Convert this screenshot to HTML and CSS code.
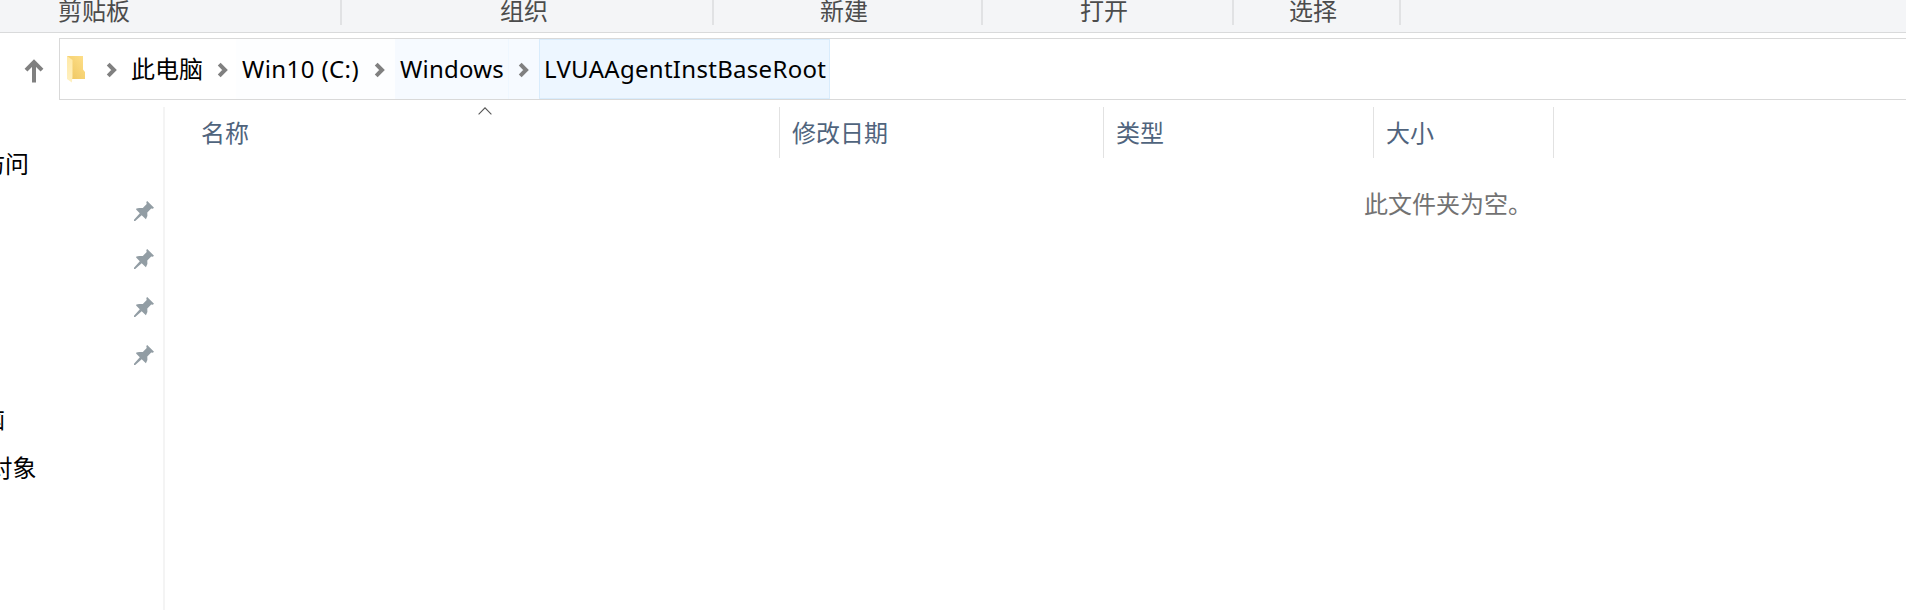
FILE: index.html
```html
<!DOCTYPE html>
<html lang="zh-CN">
<head>
<meta charset="utf-8">
<title>LVUAAgentInstBaseRoot</title>
<link rel="stylesheet" href="styles.css">
</head>
<body>
<svg class="defs" width="0" height="0">
  <symbol id="chevron" viewBox="0 0 12 16"><path d="M2.2 2.2 8 8 2.2 13.8" fill="none" stroke="#808080" stroke-width="4"/></symbol>
  <symbol id="pin" viewBox="0 0 20 20"><path d="M13.2 0 20 6.8 18.8 7.7 17.2 7.4 13.3 11.6 13.4 15 11.9 18.3 7.7 14.2 1.2 20 0 20 0 18.8 5.8 12.3 2.1 8.5 2.4 7.6 5.2 6.9 8.8 6.9 12.7 3 12.3 1Z" fill="#929da4"/></symbol>
</svg>
<header class="ribbon">
  <div class="group clipboard"><span>剪贴板</span></div>
  <div class="group organize"><span>组织</span></div>
  <div class="group new"><span>新建</span></div>
  <div class="group open"><span>打开</span></div>
  <div class="group select"><span>选择</span></div>
</header>
<nav class="toolbar">
  <svg class="up" width="20" height="24" viewBox="0 0 20 24"><path d="M10 23.500V4M2 11.200 10 3.200 18 11.200" fill="none" stroke="#808080" stroke-width="4"/></svg>
  <div class="address">
    <svg class="folder" width="20" height="28" viewBox="0 0 20 28">
      <defs>
        <linearGradient id="back" x1="0" y1="1" x2="1" y2="0"><stop offset="0" stop-color="#edc55f"/><stop offset="1" stop-color="#ffe08a"/></linearGradient>
        <linearGradient id="flap" x1="0" y1="0" x2="0" y2="1"><stop offset="0" stop-color="#ffe9a6"/><stop offset="1" stop-color="#fff0c0"/></linearGradient>
      </defs>
      <path d="M1 1H17V14.500L19 17V24H6L1 20Z" fill="url(#back)"/>
      <path d="M1 1 6.500 5V22L5.800 27.500 1 24Z" fill="url(#flap)"/>
    </svg>
    <svg class="chev first"><use href="#chevron"/></svg>
    <span class="crumb pc">此电脑</span>
    <svg class="chev second"><use href="#chevron"/></svg>
    <span class="crumb drive">Win10 (C:)</span>
    <span class="drop faint"><svg class="chev"><use href="#chevron"/></svg></span>
    <span class="crumb windows">Windows</span>
    <span class="drop"><svg class="chev"><use href="#chevron"/></svg></span>
    <span class="crumb current">LVUAAgentInstBaseRoot</span>
  </div>
</nav>
<main class="body">
  <aside class="tree">
    <div class="row">快速访问</div>
    <div class="row pinned"><svg><use href="#pin"/></svg></div>
    <div class="row pinned"><svg><use href="#pin"/></svg></div>
    <div class="row pinned"><svg><use href="#pin"/></svg></div>
    <div class="row pinned"><svg><use href="#pin"/></svg></div>
    <div class="row computer">此电脑</div>
    <div class="row objects">3D 对象</div>
  </aside>
  <section class="files">
    <div class="columns">
      <div class="column name">名称<svg class="sort" width="14" height="8" viewBox="0 0 14 8"><path d="M.6 7.300 7 .9 13.400 7.300" fill="none" stroke="#555" stroke-width="1.100"/></svg></div>
      <div class="column date">修改日期</div>
      <div class="column type">类型</div>
      <div class="column size">大小</div>
    </div>
    <p class="empty">此文件夹为空。</p>
  </section>
</main>
</body>
</html>
```
FILE: styles.css
```css
* { box-sizing: border-box; }
body {
  margin: 0;
  height: 610px;
  display: flex;
  flex-direction: column;
  overflow: hidden;
  background: #fff;
  color: #000;
  font: 24px/32px "Noto Sans", "Noto Sans CJK SC", sans-serif;
}
.defs { position: absolute; }
svg { flex: none; display: block; }

.ribbon {
  flex: none;
  display: flex;
  height: 33px;
  background: #f4f5f7;
  border-bottom: 1px solid #d9dadb;
  color: #4c4c4c;
}
.group {
  display: flex;
  justify-content: center;
  height: 25px;
  border-right: 2px solid #e1e2e4;
  white-space: nowrap;
}
.group span { margin-top: -5px; }
.clipboard { width: 342px; justify-content: flex-start; padding-left: 58px; }
.organize { width: 372px; padding-right: 6px; }
.new { width: 269px; padding-right: 7px; }
.open { width: 251px; padding-right: 7px; }
.select { width: 167px; padding-right: 7px; }

.toolbar {
  flex: none;
  display: flex;
  height: 74px;
  padding-top: 5px;
}
.up { margin: 21px 15px 0 24px; width: 20px; }
.address {
  flex: 1;
  display: flex;
  align-items: center;
  height: 62px;
  border: 1px solid #d9d9d9;
  border-right: 0;
  white-space: nowrap;
}
.folder { margin: 0 0 0 6px; }
.chev { width: 12px; height: 16px; margin-top: 2px; }
.first { margin-left: 20px; }
.second { margin-left: 14px; }
.crumb { line-height: 60px; }
.pc { width: 72px; margin-left: 13px; }
.drive {
  width: 123px;
  margin-left: 7px;
  padding-left: 6px;
  background: #fdfeff;
  letter-spacing: .4px;
}
.windows {
  width: 114px;
  padding-left: 5px;
  background: #f6faff;
  border-right: 1px solid #eff7ff;
  letter-spacing: .2px;
}
.drop {
  display: flex;
  align-items: center;
  width: 30px;
  height: 60px;
  padding-left: 9px;
  background: #f6faff;
}
.faint { width: 36px; padding-left: 15px; background: #fdfeff; }
.current {
  width: 291px;
  height: 60px;
  line-height: 58px;
  padding-left: 4px;
  background: #edf6ff;
  border: 1px solid #d9ecfc;
  letter-spacing: .29px;
}

.body { flex: 1; display: flex; min-height: 0; }
.tree {
  width: 165px;
  padding-top: 33px;
  border-right: 2px solid #f4f4f4;
  overflow: hidden;
}
.row {
  height: 48px;
  margin-left: -67px;
  line-height: 48px;
  white-space: nowrap;
}
.pinned { display: flex; align-items: center; justify-content: flex-end; padding-right: 9px; }
.pinned svg { width: 20px; height: 20px; margin-bottom: 2px; }
.computer { margin-top: 15px; }
.objects { margin-left: -49px; padding-top: 1px; }

.files { flex: 1; }
.columns { display: flex; height: 51px; color: #50647d; }
.column {
  position: relative;
  padding-left: 12px;
  line-height: 52px;
  border-right: 1px solid #e2e2e2;
}
.name { width: 615px; padding-left: 36px; }
.date { width: 324px; }
.type { width: 270px; }
.size { width: 180px; }
.sort { position: absolute; left: 312.5px; top: 0; }
.empty { margin: 30px 0 0 1199px; color: #727272; }
```
